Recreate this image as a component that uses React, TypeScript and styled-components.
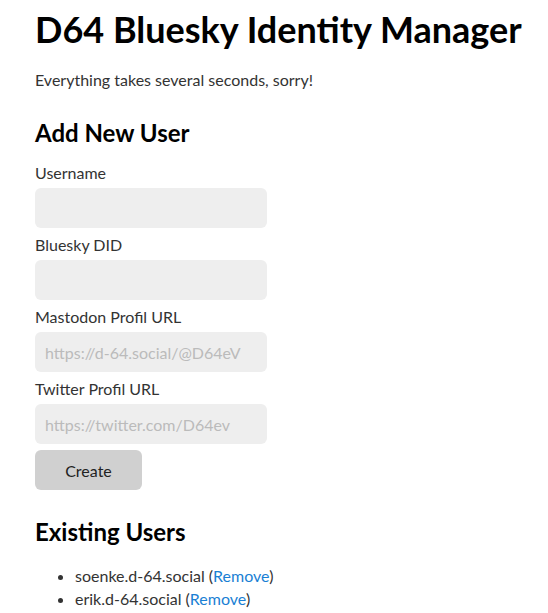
import React from "react";
import styled, { createGlobalStyle } from "styled-components";

const Global = createGlobalStyle`
  html, body { margin: 0; padding: 0; background: #fff; }
  body { font-family: Lato, "Noto Sans", sans-serif; color: #333; }
`;

const Page = styled.main`
  padding: 8px 35px 0;
  display: flex;
  flex-direction: column;
`;

const Title = styled.h1`
  margin: 0;
  font-size: 36px;
  line-height: 43px;
  font-weight: 700;
  color: #000;
  white-space: nowrap;
`;

const Note = styled.p`
  margin: 17px 0 0;
  font-size: 16px;
  line-height: 24px;
`;

const SectionTitle = styled.h2<{ $top: number }>`
  margin: ${(p) => p.$top}px 0 0;
  font-size: 24px;
  line-height: 29px;
  font-weight: 700;
  color: #000;
`;

const Form = styled.form`
  display: flex;
  flex-direction: column;
  margin-top: 14px;
`;

const Field = styled.div`
  display: flex;
  flex-direction: column;
  gap: 3px;
  margin-bottom: 5px;
`;

const Label = styled.label`
  font-size: 16px;
  line-height: 24px;
  color: #333;
`;

const Input = styled.input`
  box-sizing: border-box;
  width: 232px;
  height: 40px;
  border: none;
  border-radius: 6px;
  background: #eee;
  padding: 0 10px;
  font-family: inherit;
  font-size: 16px;
  color: #333;
  outline: none;
  &::placeholder { color: #bbb; }
`;

const Button = styled.button`
  box-sizing: border-box;
  width: 107px;
  height: 40px;
  margin-top: 1px;
  border: none;
  border-radius: 6px;
  background: #d0d0d0;
  color: #222;
  font-family: inherit;
  font-size: 16px;
`;

const List = styled.ul`
  margin: 18px 0 0;
  padding-left: 40px;
  font-size: 16px;
  line-height: 23px;
`;

const Item = styled.li`
  color: #333;
`;

const Link = styled.a`
  color: #1a7fd4;
  text-decoration: none;
`;

const users = ["soenke.d-64.social", "erik.d-64.social"];

export default function App() {
  return (
    <>
      <Global />
      <Page>
        <Title>D64 Bluesky Identity Manager</Title>
        <Note>Everything takes several seconds, sorry!</Note>
        <SectionTitle $top={26}>Add New User</SectionTitle>
        <Form onSubmit={(e) => e.preventDefault()}>
          <Field>
            <Label>Username</Label>
            <Input />
          </Field>
          <Field>
            <Label>Bluesky DID</Label>
            <Input />
          </Field>
          <Field>
            <Label>Mastodon Profil URL</Label>
            <Input placeholder="https://d-64.social/@D64eV" />
          </Field>
          <Field>
            <Label>Twitter Profil URL</Label>
            <Input placeholder="https://twitter.com/D64ev" />
          </Field>
          <Button type="submit">Create</Button>
        </Form>
        <SectionTitle $top={27}>Existing Users</SectionTitle>
        <List>
          {users.map((u) => (
            <Item key={u}>
              {u} (<Link href="#">Remove</Link>)
            </Item>
          ))}
        </List>
      </Page>
    </>
  );
}
